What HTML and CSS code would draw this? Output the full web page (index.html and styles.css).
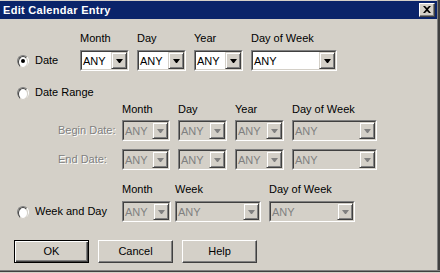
FILE: index.html
```html
<!DOCTYPE html>
<html lang="en">
<head>
    <meta charset="UTF-8">
    <title>Edit Calendar Entry</title>
    <link rel="stylesheet" href="styles.css">
</head>
<body>
    <div class="window">
        <div class="titlebar">
            <span class="title">Edit Calendar Entry</span>
            <span class="close">
                <svg width="8" height="7" viewBox="0 0 8 7"><path d="M0 0h2l2 2 2-2h2l-3 3.5 3 3.5h-2l-2-2-2 2h-2l3-3.5z" fill="#000"/></svg>
            </span>
        </div>

        <!-- Date -->
        <div class="row row-date labels">
            <span></span>
            <span>Month</span>
            <span>Day</span>
            <span>Year</span>
            <span>Day of Week</span>
        </div>
        <div class="row row-date controls">
            <label class="choice"><span class="radio checked"></span>Date</label>
            <div class="combo"><div class="combo-inner"><span class="value">ANY</span><span class="drop"></span></div></div>
            <div class="combo"><div class="combo-inner"><span class="value">ANY</span><span class="drop"></span></div></div>
            <div class="combo"><div class="combo-inner"><span class="value">ANY</span><span class="drop"></span></div></div>
            <div class="combo"><div class="combo-inner"><span class="value">ANY</span><span class="drop"></span></div></div>
        </div>

        <!-- Date Range -->
        <label class="choice range-choice"><span class="radio"></span>Date Range</label>
        <div class="row row-range labels range-labels">
            <span></span>
            <span>Month</span>
            <span>Day</span>
            <span>Year</span>
            <span>Day of Week</span>
        </div>
        <div class="row row-range controls begin-row">
            <span class="sub-label">Begin Date:</span>
            <div class="combo disabled"><div class="combo-inner"><span class="value">ANY</span><span class="drop"></span></div></div>
            <div class="combo disabled"><div class="combo-inner"><span class="value">ANY</span><span class="drop"></span></div></div>
            <div class="combo disabled"><div class="combo-inner"><span class="value">ANY</span><span class="drop"></span></div></div>
            <div class="combo disabled"><div class="combo-inner"><span class="value">ANY</span><span class="drop"></span></div></div>
        </div>
        <div class="row row-range controls end-row">
            <span class="sub-label">End Date:</span>
            <div class="combo disabled"><div class="combo-inner"><span class="value">ANY</span><span class="drop"></span></div></div>
            <div class="combo disabled"><div class="combo-inner"><span class="value">ANY</span><span class="drop"></span></div></div>
            <div class="combo disabled"><div class="combo-inner"><span class="value">ANY</span><span class="drop"></span></div></div>
            <div class="combo disabled"><div class="combo-inner"><span class="value">ANY</span><span class="drop"></span></div></div>
        </div>

        <!-- Week and Day -->
        <div class="row row-week labels week-labels">
            <span></span>
            <span>Month</span>
            <span>Week</span>
            <span>Day of Week</span>
        </div>
        <div class="row row-week controls week-row">
            <label class="choice"><span class="radio"></span>Week and Day</label>
            <div class="combo disabled w-month"><div class="combo-inner"><span class="value">ANY</span><span class="drop"></span></div></div>
            <div class="combo disabled w-wide"><div class="combo-inner"><span class="value">ANY</span><span class="drop"></span></div></div>
            <div class="combo disabled w-wide"><div class="combo-inner"><span class="value">ANY</span><span class="drop"></span></div></div>
        </div>

        <div class="buttons">
            <button class="btn default">OK</button>
            <button class="btn">Cancel</button>
            <button class="btn">Help</button>
        </div>
    </div>
</body>
</html>
```

FILE: styles.css
```css
* {
    margin: 0;
    padding: 0;
    box-sizing: border-box;
}

html,
body {
    background-color: #d4d0c8;
    font-family: "Liberation Sans", Arial, sans-serif;
    font-size: 11px;
    line-height: 13px;
    color: #000;
}

.window {
    width: 440px;
    height: 272px;
    padding-right: 3px;
    border-bottom: 1px solid #404040;
    box-shadow: inset 0 -1px #808080, inset -2px 0 #404040, inset -3px 0 #808080;
    overflow: hidden;
}

.titlebar {
    margin-top: 1px;
    height: 18px;
    background-color: #0a246a;
    display: flex;
    align-items: center;
    justify-content: space-between;
    padding: 0 2px 0 3px;
}

.title {
    color: #fff;
    font-weight: bold;
    font-size: 11px;
    letter-spacing: 0.3px;
}

.close {
    width: 16px;
    height: 14px;
    background: #d4d0c8;
    border: 1px solid;
    border-color: #fff #404040 #404040 #fff;
    box-shadow: inset -1px -1px #808080;
    display: flex;
    align-items: center;
    justify-content: center;
    padding: 0 1px 1px 0;
}

.close svg {
    display: block;
}

/* grid rows */
.row {
    display: grid;
}

.row-date {
    grid-template-columns: 72px 49px 49px 49px 86px;
    column-gap: 8px;
}

.row-range {
    grid-template-columns: 114px 48px 49px 49px 85px;
    column-gap: 8px;
}

.row-week {
    grid-template-columns: 122px 53px 94px 86px;
}

.labels {
    height: 13px;
    white-space: nowrap;
}

.row-date.labels {
    margin-top: 13px;
}

.controls {
    align-items: center;
    margin-top: 5px;
}

.range-labels {
    margin-top: 4px;
}

.begin-row {
    margin-top: 4px;
}

.end-row {
    margin-top: 8px;
}

.week-labels {
    margin-top: 13px;
}

/* radio choices */
.choice {
    display: flex;
    align-items: center;
    gap: 6px;
    padding-left: 17px;
    white-space: nowrap;
}

.range-choice {
    margin-top: 15px;
    height: 13px;
}

.radio {
    width: 12px;
    height: 12px;
    border-radius: 50%;
    border: 1px solid;
    border-color: #808080 #fff #fff #808080;
    display: flex;
    flex-shrink: 0;
}

.radio::before {
    content: "";
    width: 10px;
    height: 10px;
    border-radius: 50%;
    border: 1px solid;
    border-color: #404040 #d4d0c8 #d4d0c8 #404040;
    background: #fff;
}

.radio.checked {
    position: relative;
}

.radio.checked::after {
    content: "";
    position: absolute;
    left: 3px;
    top: 3px;
    width: 4px;
    height: 4px;
    border-radius: 50%;
    background: #000;
}

.sub-label {
    padding-left: 58px;
    color: #808080;
    text-shadow: 1px 1px #fff;
    white-space: nowrap;
}

/* combo boxes */
.combo {
    height: 21px;
    border: 1px solid;
    border-color: #808080 #fff #fff #808080;
    display: flex;
}

.w-month {
    width: 49px;
}

.w-wide {
    width: 86px;
}

.combo-inner {
    flex: 1;
    display: flex;
    align-items: center;
    justify-content: space-between;
    border: 1px solid;
    border-color: #404040 #d4d0c8 #d4d0c8 #404040;
    background: #fff;
    padding-left: 1px;
}

.value {
    padding-top: 1px;
}

.drop {
    width: 16px;
    height: 17px;
    background: #d4d0c8;
    border: 1px solid;
    border-color: #d4d0c8 #404040 #404040 #d4d0c8;
    box-shadow: inset 1px 1px #fff, inset -1px -1px #808080;
    display: flex;
    align-items: center;
    justify-content: center;
    padding: 1px 0 0 1px;
}

.drop::after {
    content: "";
    width: 7px;
    height: 4px;
    background: #000;
    clip-path: polygon(0 0, 100% 0, 57% 100%, 43% 100%);
}

.combo.disabled .combo-inner {
    background: #d4d0c8;
}

.combo.disabled .value {
    color: #808080;
}

.combo.disabled .drop::after {
    background: #808080;
}

/* buttons */
.buttons {
    display: flex;
    gap: 9px;
    margin: 18px 0 0 14px;
}

.btn {
    width: 75px;
    height: 23px;
    background: #d4d0c8;
    font-family: "Liberation Sans", Arial, sans-serif;
    font-size: 11px;
    color: #000;
    border: 1px solid;
    border-color: #fff #404040 #404040 #fff;
    box-shadow: inset -1px -1px #808080;
    padding-bottom: 2px;
}

.btn.default {
    border-color: #000;
    box-shadow: inset 1px 1px #fff, inset -1px -1px #404040, inset -2px -2px #808080;
}
```
